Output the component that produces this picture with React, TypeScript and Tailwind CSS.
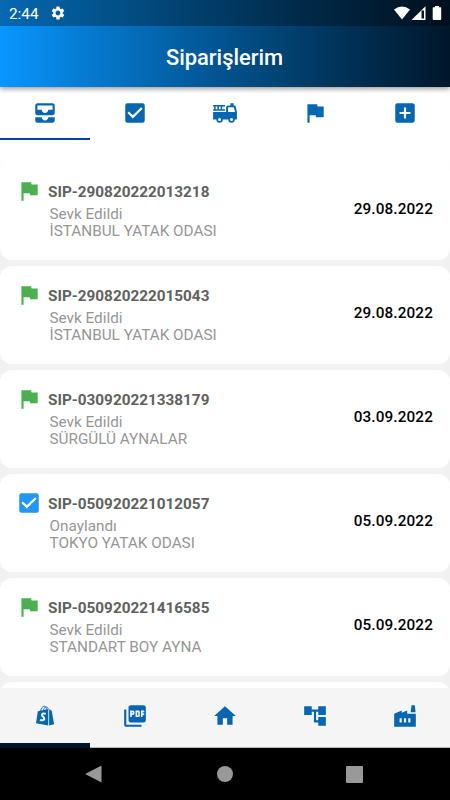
import React, { useState } from "react";
import {
  MdAccountTree,
  MdAddBox,
  MdAllInbox,
  MdCheckBox,
  MdFactory,
  MdFlag,
  MdHome,
  MdPictureAsPdf,
  MdSettings,
} from "react-icons/md";

type Order = {
  code: string;
  status: string;
  product: string;
  date: string;
};

const orders: Order[] = [
  { code: "SIP-290820222013218", status: "Sevk Edildi", product: "İSTANBUL YATAK ODASI", date: "29.08.2022" },
  { code: "SIP-290820222015043", status: "Sevk Edildi", product: "İSTANBUL YATAK ODASI", date: "29.08.2022" },
  { code: "SIP-030920221338179", status: "Sevk Edildi", product: "SÜRGÜLÜ AYNALAR", date: "03.09.2022" },
  { code: "SIP-050920221012057", status: "Onaylandı", product: "TOKYO YATAK ODASI", date: "05.09.2022" },
  { code: "SIP-050920221416585", status: "Sevk Edildi", product: "STANDART BOY AYNA", date: "05.09.2022" },
];

const FireTruckIcon = ({ className }: { className?: string }) => (
  <svg viewBox="0 0 24 24" fill="currentColor" className={className}>
    <path
      fillRule="evenodd"
      d="M1 4.600h11v1.500h-1v2.400h1V10H1V8.500h1V6.100H1V4.600zm2.400 1.500v2.400h1.600V6.100H3.400zm3 0v2.400h1.600V6.100H6.400zm3 0v2.400h1.400V6.100H9.400z"
    />
    <path
      fillRule="evenodd"
      d="M17 3h3v2h.5c.7 0 1.200.4 1.400 1L23 11v7h-2a3 3 0 0 1-6 0H10a3 3 0 0 1-6 0H1v-7h12V7c0-1.100.9-2 2-2h2V3zM14.800 6.600V11h6.600L20 6.600h-5.200zM7 16.600a1.400 1.400 0 1 0 0 2.800 1.400 1.400 0 0 0 0-2.800zm11 0a1.400 1.400 0 1 0 0 2.800 1.400 1.400 0 0 0 0-2.800z"
    />
  </svg>
);

const ShoppingBagIcon = ({ className }: { className?: string }) => (
  <svg viewBox="0 0 24 24" className={className}>
    <path d="M5.400 7.700 15 5.600V20.800L3.700 18.800z" fill="currentColor" />
    <path d="M15.800 5.800 18.200 7.200 20.400 19.600 15.800 20.800z" fill="currentColor" />
    <path
      d="M7.900 7.500C8.300 4.600 10 3 11.300 3S13.400 4.300 13.500 6.300M10.600 6.800C11 4.400 12.300 3.400 13.400 3.600S14.900 4.800 15 6"
      fill="none"
      stroke="currentColor"
      strokeWidth="0.8"
    />
    <path
      d="M12.600 10.200C11.300 9.400 9.300 9.500 9.200 11.100c0 1.500 2.300 1.700 2.200 3.500-.2 1.600-2.300 1.800-3.900.7"
      fill="none"
      stroke="#f5f5f5"
      strokeWidth="1.900"
    />
  </svg>
);

const tabs = [MdAllInbox, MdCheckBox, FireTruckIcon, MdFlag, MdAddBox];
const menu = [ShoppingBagIcon, MdPictureAsPdf, MdHome, MdAccountTree, MdFactory];

const StatusBar = () => (
  <div className="flex h-[26px] items-center bg-black/30 pl-[9px] pr-[7px] text-white">
    <span className="pt-[3px] text-[15.3px]">2:44</span>
    <MdSettings className="ml-[11px] h-4 w-4" />
    <svg viewBox="0 0 50 16" className="ml-auto h-4 w-[50px]" fill="white">
      <path d="M1 4.500Q9 -1.500 17 4.500L9 14.500z" />
      <path d="M32.500 1.300V15H18.500z" />
      <path d="M28.500 5.500h2.500V13.500H28.500z" fill="#02192b" />
      <path d="M42 1h4v1.200h1.500q.7 0 .7.700v11q0 1-1 1h-6.500q-1 0-1-1v-11q0-.7.700-.7H42z" />
    </svg>
  </div>
);

const OrderCard = ({ order }: { order: Order }) => (
  <li className="flex h-[98px] items-center justify-between rounded-[12px] bg-white pb-[3px] pl-[16px] pr-[17px]">
    <div className="flex gap-[6px]">
      {order.status === "Onaylandı" ? (
        <MdCheckBox className="h-[26px] w-[26px] text-[#2196f3]" />
      ) : (
        <MdFlag className="h-[26px] w-[26px] text-[#4caf50]" />
      )}
      <div className="pt-[5px]">
        <p className="text-[15.3px] leading-[18px] font-bold text-[#616161]">{order.code}</p>
        <p className="mt-[4px] pl-[1.5px] text-[15.3px] leading-[18px] text-[#969696]">{order.status}</p>
        <p className="pl-[1.5px] text-[15.3px] leading-[17.5px] text-[#969696]">{order.product}</p>
      </div>
    </div>
    <span className="text-[15.3px] font-medium tracking-[0.12px] text-black">{order.date}</span>
  </li>
);

const App = () => {
  const [activeTab, setActiveTab] = useState(0);
  const [activeMenu, setActiveMenu] = useState(0);

  return (
    <div className="flex h-[800px] w-[450px] flex-col overflow-hidden bg-white font-[Roboto,sans-serif]">
      <header className="relative z-10 h-[87px] shrink-0 bg-linear-to-r from-[#0996ff] to-[#00172b] shadow-[0_2px_5px_rgba(0,0,0,0.4)]">
        <StatusBar />
        <h1 className="flex h-[61px] items-center justify-center pt-[3px] pr-[1px] text-[21.9px] font-medium text-white">
          Siparişlerim
        </h1>
      </header>

      {/* Order filters */}
      <nav className="flex h-[53px] shrink-0 bg-white">
        {tabs.map((Icon, index) => (
          <button
            key={index}
            onClick={() => setActiveTab(index)}
            className={`flex flex-1 items-center justify-center border-b-2 text-[#0766b2] ${
              activeTab === index ? "border-[#0242a5]" : "border-transparent"
            }`}
          >
            <Icon className="h-[26px] w-[26px]" />
          </button>
        ))}
      </nav>

      <main className="flex-1 overflow-hidden bg-linear-to-b from-white from-[3%] to-[#f1f1f1] to-[20%] pt-[22px]">
        <ul className="flex flex-col gap-[6px]">
          {orders.map((order) => (
            <OrderCard key={order.code} order={order} />
          ))}
          <li className="h-[98px] rounded-[12px] bg-white" />
        </ul>
      </main>

      {/* Main menu */}
      <nav className="flex h-[60px] shrink-0 bg-[#f5f5f5]">
        {menu.map((Icon, index) => (
          <button
            key={index}
            onClick={() => setActiveMenu(index)}
            className={`flex flex-1 justify-center pt-[15px] text-[#0766b2] ${
              activeMenu === index ? "border-b-5 border-[#001529]" : "border-b border-[#b5b5b5]"
            }`}
          >
            <Icon className="h-[26px] w-[26px]" />
          </button>
        ))}
      </nav>

      {/* System navigation */}
      <div className="flex h-[52px] shrink-0 items-center justify-between bg-black pl-[85px] pr-[87px]">
        <svg viewBox="0 0 18 18" className="h-[18px] w-[18px]" fill="#999">
          <path d="M16.500 .5v17L1 9.500q-.8-.5 0-1z" />
        </svg>
        <span className="h-4 w-4 rounded-full bg-[#999]" />
        <span className="h-[17px] w-[17px] rounded-[1px] bg-[#999]" />
      </div>
    </div>
  );
};

export default App;
